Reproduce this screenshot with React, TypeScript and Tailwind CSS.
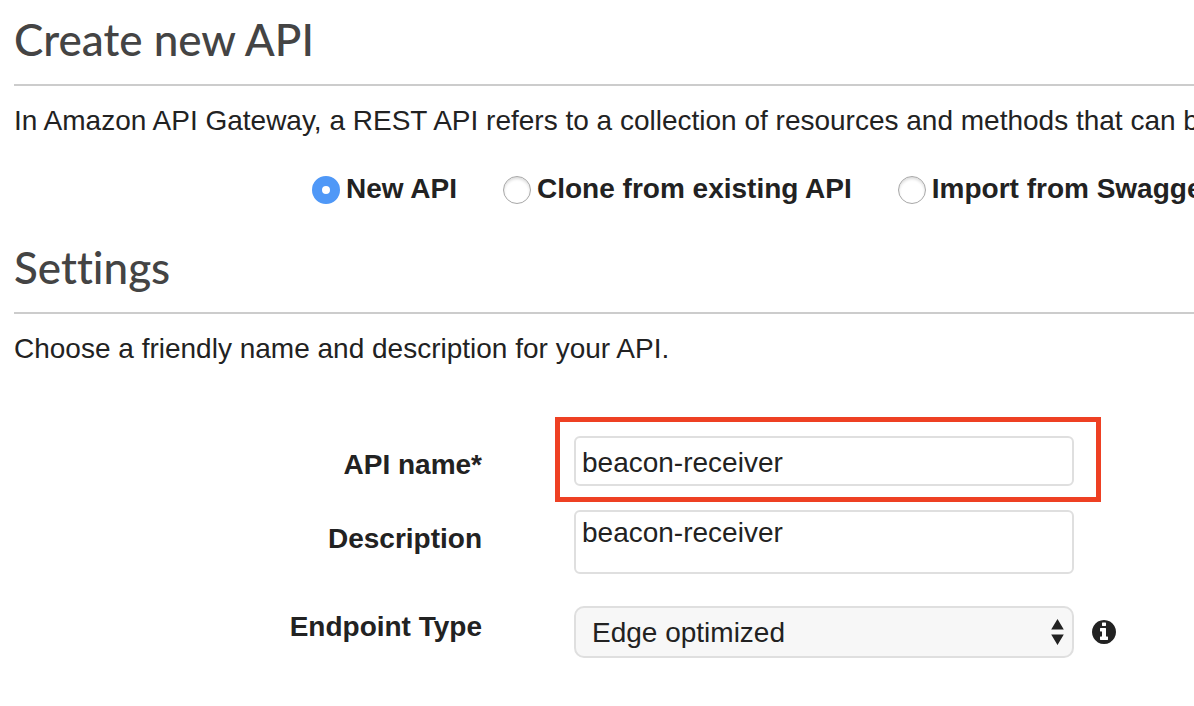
import { useState } from "react";
import type { ReactNode } from "react";

const sources = ["New API", "Clone from existing API", "Import from Swagger"];

function Heading({ children }: { children: ReactNode }) {
  return (
    <h2 className="border-b-2 border-[#cccccc] pb-[17px] font-[Lato,sans-serif] text-[44px] leading-[56px] font-medium text-[#444444] [font-variant-ligatures:none]">
      {children}
    </h2>
  );
}

function InfoIcon() {
  return (
    <svg viewBox="128 128 1536 1536" className="size-6 fill-current" aria-hidden="true">
      <path d="M1152 1376v-160q0-14-9-23t-23-9h-96v-512q0-14-9-23t-23-9h-320q-14 0-23 9t-9 23v160q0 14 9 23t23 9h96v320h-96q-14 0-23 9t-9 23v160q0 14 9 23t23 9h448q14 0 23-9t9-23zM1024 480v-160q0-14-9-23t-23-9h-192q-14 0-23 9t-9 23v160q0 14 9 23t23 9h192q14 0 23-9t9-23zM1664 896q0 209-103 385.5t-279.5 279.5-385.5 103-385.5-103-279.5-279.5-103-385.5 103-385.5 279.5-279.5 385.5-103 385.5 103 279.5 279.5 103 385.5z" />
    </svg>
  );
}

export default function App() {
  const [source, setSource] = useState(sources[0]);
  const [name, setName] = useState("beacon-receiver");
  const [description, setDescription] = useState("beacon-receiver");

  return (
    <main className="min-h-screen overflow-hidden bg-white pt-[11px] pl-3.5 font-['Liberation_Sans',Arial,sans-serif] text-[28px] leading-10 text-[#222222]">
      <section>
        <Heading>Create new API</Heading>
        <p className="pt-[15px] whitespace-nowrap">
          In Amazon API Gateway, a REST API refers to a collection of resources and methods that can be
        </p>
        <div role="radiogroup" aria-label="API source" className="flex gap-[46px] pt-7 pl-[298px] font-bold whitespace-nowrap">
          {sources.map((item) => (
            <label key={item} className="flex shrink-0 items-center gap-1.5">
              <input
                type="radio"
                name="source"
                value={item}
                checked={source === item}
                onChange={() => setSource(item)}
                className="mt-0.5 size-7 shrink-0 appearance-none rounded-full border border-[#a8a8a8] bg-white shadow-[inset_0_2px_3px_rgba(0,0,0,0.14)] checked:border-10 checked:border-[#4f98f7] checked:shadow-none"
              />
              {item}
            </label>
          ))}
        </div>
      </section>

      <section className="pt-[30px]">
        <Heading>Settings</Heading>
        <p className="pt-[15px]">Choose a friendly name and description for your API.</p>

        <form className="grid grid-cols-[468px_500px_auto] gap-x-[92px] pt-[67px]" onSubmit={(e) => e.preventDefault()}>
          <label htmlFor="api-name" className="pt-[9px] text-right font-bold">API name*</label>
          <div className="relative col-span-2 mb-6 w-[500px]">
            <input
              id="api-name"
              type="text"
              value={name}
              onChange={(e) => setName(e.target.value)}
              className="block h-[50px] w-full rounded-md border-2 border-[#dfdfdf] bg-white px-1.5 pt-[3px] outline-none"
            />
            <div className="pointer-events-none absolute -top-[19px] -right-[27px] -bottom-4 -left-[19px] border-5 border-[#ee4023]" />
          </div>

          <label htmlFor="description" className="pt-[9px] text-right font-bold">Description</label>
          <div className="col-span-2 mb-8 w-[500px]">
            <textarea
              id="description"
              value={description}
              onChange={(e) => setDescription(e.target.value)}
              className="block h-16 w-full resize-none overflow-hidden rounded-md border-2 border-[#dfdfdf] bg-white px-1.5 pt-px outline-none"
            />
          </div>

          <label htmlFor="endpoint" className="pt-px text-right font-bold">Endpoint Type</label>
          <div className="col-span-2 flex items-center gap-[18px]">
            <div className="relative w-[500px]">
              <select
                id="endpoint"
                className="block h-[52px] w-full appearance-none rounded-[10px] border-2 border-[#dfdfdf] bg-[#f7f7f7] px-4 pt-0.5 outline-none"
              >
                <option>Edge optimized</option>
              </select>
              <svg viewBox="0 0 13 26" className="pointer-events-none absolute top-[13px] right-2.5 h-[26px] w-[13px] fill-[#222222]" aria-hidden="true">
                <path d="M6.500 0L12.800 10.500H.2zM.2 15.500H12.800L6.500 26z" />
              </svg>
            </div>
            <button type="button" aria-label="Endpoint type information">
              <InfoIcon />
            </button>
          </div>
        </form>
      </section>
    </main>
  );
}
